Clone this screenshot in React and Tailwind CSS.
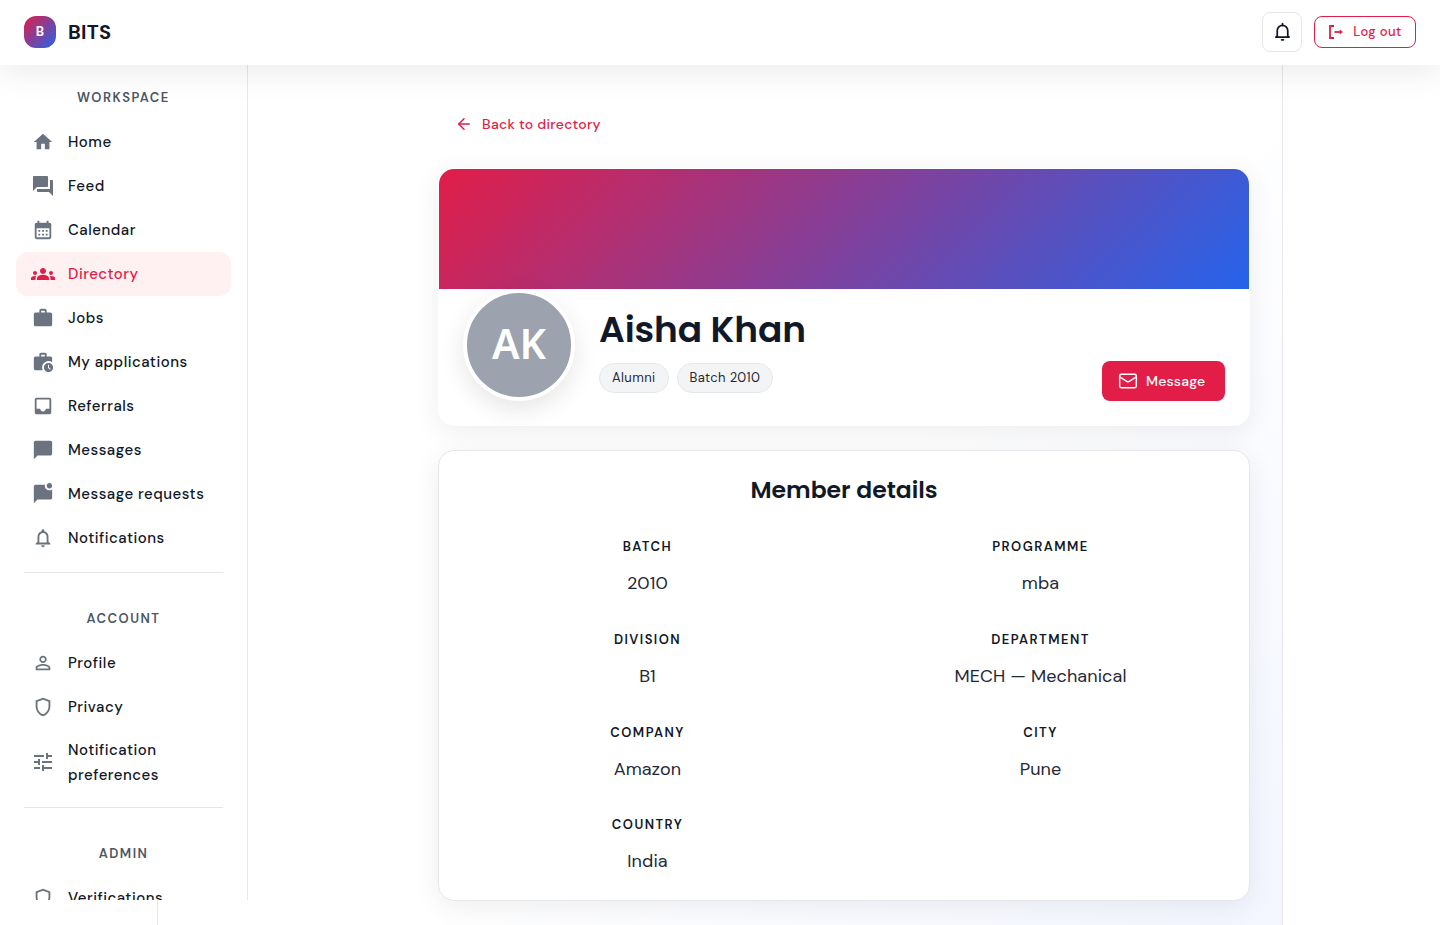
import React from "react";
import { MdHome, MdForum, MdCalendarMonth, MdGroups, MdWork, MdWorkHistory, MdInbox, MdChatBubble, MdMarkChatUnread, MdOutlineNotifications, MdPersonOutline, MdOutlineShield, MdTune } from "react-icons/md";
import { ArrowLeft, Mail } from "lucide-react";

const body = { fontFamily: '"DM Sans", Inter, "Liberation Sans", sans-serif' };
const head = { fontFamily: 'Poppins, Inter, "Liberation Sans", sans-serif' };

const Item = ({ icon: I, label, active, tall, big }) => (
  <div className={`flex items-center gap-[13px] rounded-xl pl-[15px] pr-4 text-[15px] font-medium leading-[25px] tracking-[0.5px] ${tall ? "h-[66px] pt-px" : "h-11"} ${active ? "bg-[#fff1f2] text-[#e11d48]" : "text-[#111827]"}`}>
    <span className={`flex h-6 w-6 shrink-0 items-center justify-center ${tall ? "-mt-[2px]" : ""}`}>
      <I className={`${big ? "h-6 w-6" : "h-[22px] w-[22px]"} ${active ? "text-[#e11d48]" : "text-[#6b7280]"}`} />
    </span>
    <span>{label}</span>
  </div>
);

const Section = ({ children }) => (
  <div className="flex h-[42px] items-center justify-center pt-[2px] text-[13px] font-semibold uppercase tracking-[1.5px] text-[#4b5563]">{children}</div>
);

const Divider = ({ className }) => <div className={`mx-2 h-px bg-[#e5e7eb] ${className}`} />;

const Detail = ({ label, value }) => (
  <div className="flex h-[69px] flex-col items-center text-center">
    <div className="text-[13px] font-semibold uppercase leading-[20px] tracking-[1.45px] text-[#111827]">{label}</div>
    <div className="mt-3 text-[18px] leading-[28px] tracking-[0.1px] text-[#1f2937]">{value}</div>
  </div>
);

export default function App() {
  return (
    <div className="flex h-[925px] flex-col overflow-hidden bg-white" style={body}>
      <header className="relative z-10 flex h-[65px] shrink-0 items-center justify-between bg-white pb-[2px] pl-6 pr-6 shadow-[0_8px_32px_rgba(0,0,0,0.08)]">
        <div className="flex items-center gap-3">
          <div className="flex h-8 w-8 items-center justify-center rounded-xl bg-[linear-gradient(135deg,#e11d48,#2563eb)] text-[13px] font-bold text-white">B</div>
          <span className="text-[20px] font-bold tracking-[0.3px] text-[#111827]">BITS</span>
        </div>
        <div className="flex items-center gap-3">
          <button className="flex h-10 w-10 items-center justify-center rounded-lg border border-[#e5e7eb] bg-white">
            <svg viewBox="0 0 24 24" className="h-[21px] w-[21px]" fill="none" stroke="#111827" strokeWidth="2" strokeLinecap="round" strokeLinejoin="round">
              <path d="M6 17V11a6 6 0 0 1 12 0v6l1.5 1.5h-15z" />
              <path d="M12 3v2" />
              <path d="M11 21.5h2" />
            </svg>
          </button>
          <button className="flex h-8 w-[102px] items-center justify-center gap-[9px] rounded-lg border border-[#e11d48] bg-white text-[13px] font-medium tracking-[0.4px] text-[#e11d48]">
            <svg viewBox="0 0 16 16" className="h-4 w-4" fill="none" stroke="#e11d48" strokeWidth="1.8">
              <path d="M6 2H2v12h4" />
              <path d="M6.5 8h6.5" />
              <path d="M12 6l2.5 2-2.5 2z" fill="#e11d48" strokeWidth="0.6" />
            </svg>
            Log out
          </button>
        </div>
      </header>

      <div className="flex min-h-0 flex-1">
        <div className="flex w-[248px] shrink-0 flex-col">
          <aside className="h-[835px] shrink-0 overflow-hidden border-r border-[#e5e7eb] bg-white px-4 pt-[11px]">
            <Section>Workspace</Section>
            <div className="mt-[2px]">
              <Item icon={MdHome} label="Home" />
              <Item icon={MdForum} label="Feed" big />
              <Item icon={MdCalendarMonth} label="Calendar" />
              <Item icon={MdGroups} label="Directory" active big />
              <Item icon={MdWork} label="Jobs" />
              <Item icon={MdWorkHistory} label="My applications" />
              <Item icon={MdInbox} label="Referrals" />
              <Item icon={MdChatBubble} label="Messages" />
              <Item icon={MdMarkChatUnread} label="Message requests" />
              <Item icon={MdOutlineNotifications} label="Notifications" />
            </div>
            <Divider className="mt-3" />
            <div className="mt-6"><Section>Account</Section></div>
            <div className="mt-[2px]">
              <Item icon={MdPersonOutline} label="Profile" />
              <Item icon={MdOutlineShield} label="Privacy" />
              <Item icon={MdTune} label="Notification preferences" tall big />
            </div>
            <Divider className="mt-3" />
            <div className="mt-6"><Section>Admin</Section></div>
            <div className="mt-[2px]">
              <Item icon={MdOutlineShield} label="Verifications" />
            </div>
          </aside>
          <div className="h-[25px] w-[158px] border-r border-[#e5e7eb]" />
        </div>

        <main className="w-[1035px] shrink-0 border-r border-[#e5e7eb] bg-[linear-gradient(135deg,#ffffff_55%,#f3f6ff_100%)] pl-[190px] pr-[32px]">
          <div className="flex h-[103px] items-center gap-[9px] pl-[17px] pt-[15px] text-[14px] font-medium tracking-[0.3px] text-[#e11d48]">
            <ArrowLeft className="h-[18px] w-[18px]" strokeWidth={2} />
            <span>Back to directory</span>
          </div>

          <section className="h-[258px] overflow-hidden rounded-2xl border border-white bg-white shadow-[0_6px_28px_rgba(0,0,0,0.07)]">
            <div className="h-[120px] bg-[linear-gradient(135deg,#e11d48,#2563eb)]" />
            <div className="flex h-[136px] items-start px-6">
              <div className="flex h-28 w-28 shrink-0 items-center justify-center rounded-full border-4 border-white bg-[#9ca3af] pb-[2px] text-[41px] font-semibold text-white shadow-[0_8px_24px_rgba(0,0,0,0.1)]" style={{ fontFamily: '"Noto Sans", sans-serif' }}>AK</div>
              <div className="ml-6 flex-1 pt-[15px]">
                <h1 className="text-[36px] font-semibold leading-[52px] tracking-[-0.1px] text-[#111827]" style={head}>Aisha Khan</h1>
                <div className="mt-[7px] flex gap-2">
                  <span className="flex h-[30px] items-center rounded-full border border-[#e5e7eb] bg-[#f3f4f6] px-3 text-[13px] tracking-[0.4px] text-[#1f2937]">Alumni</span>
                  <span className="flex h-[30px] items-center rounded-full border border-[#e5e7eb] bg-[#f3f4f6] px-3 text-[13px] tracking-[0.35px] text-[#1f2937]">Batch 2010</span>
                </div>
              </div>
              <button className="mt-[72px] flex h-10 w-[123px] items-center gap-2 rounded-lg bg-[#e11d48] pl-4 text-[14px] font-medium tracking-[0.2px] text-white">
                <Mail className="h-5 w-5" strokeWidth={1.75} />
                Message
              </button>
            </div>
          </section>

          <section className="mt-6 h-[451px] rounded-2xl border border-[#e5e7eb] bg-white px-6 pt-[19px] shadow-[0_6px_28px_rgba(0,0,0,0.07)]">
            <h2 className="text-center text-[23.5px] font-semibold leading-[40px] text-[#111827]" style={head}>Member details</h2>
            <div className="mt-[27px] grid grid-cols-2 gap-x-6 gap-y-[23.8px]">
              <Detail label="Batch" value="2010" />
              <Detail label="Programme" value="mba" />
              <Detail label="Division" value="B1" />
              <Detail label="Department" value="MECH — Mechanical" />
              <Detail label="Company" value="Amazon" />
              <Detail label="City" value="Pune" />
              <Detail label="Country" value="India" />
            </div>
          </section>
        </main>
        <div className="flex-1 bg-white" />
      </div>
    </div>
  );
}
